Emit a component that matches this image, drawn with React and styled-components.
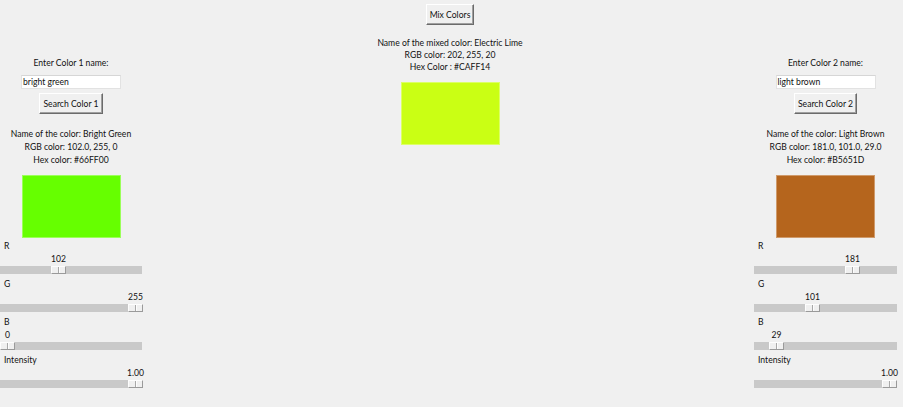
import React from "react";
import styled, { createGlobalStyle } from "styled-components";

const GlobalStyle = createGlobalStyle`
    body {
        margin: 0;
        background: #f0f0f0;
        font-family: "Lato", "Open Sans", sans-serif;
        font-size: 8.6px;
        color: #111;
    }
`;

const Window = styled.div`
    display: grid;
    grid-template-columns: 142px 1fr 143px;
    padding-right: 6px;
    height: 407px;
    overflow: hidden;
`;

const Side = styled.div`
    display: flex;
    flex-direction: column;
    align-items: center;
    padding-top: 57px;
`;

const Center = styled.div`
    display: flex;
    flex-direction: column;
    align-items: center;
    padding-top: 4px;
    padding-left: 4px;
`;

const Text = styled.div`
    line-height: ${p => p.lh || 13}px;
    text-align: center;
    white-space: nowrap;
`;

const Entry = styled.div`
    width: 97px;
    height: 12px;
    margin-top: 5px;
    background: #fff;
    border: 1px solid #e2e2e2;
    border-top-color: #d6d6d6;
    line-height: 12px;
    padding-left: 1px;
    box-sizing: content-box;
    white-space: nowrap;
`;

const Button = styled.div`
    height: 19px;
    padding: 0 3px;
    margin-top: ${p => p.mt || 0}px;
    display: flex;
    align-items: center;
    background: #f0f0f0;
    border: 1px solid;
    border-color: #fff #6b6b6b #6b6b6b #fff;
    box-shadow: inset -1px -1px 0 #a0a0a0;
    white-space: nowrap;
`;

const Info = styled.div`
    margin-top: ${p => p.mt}px;
`;

const Swatch = styled.div`
    width: 99px;
    height: 63px;
    margin-top: ${p => p.mt || 9}px;
    background: ${p => p.color};
    box-shadow: inset 0 0 0 1px rgba(255, 255, 255, 0.35);
`;

const Sliders = styled.div`
    align-self: stretch;
    margin-top: 2px;
`;

const SliderGroup = styled.div`
    height: 38px;
`;

const SliderLabel = styled.div`
    line-height: 13px;
    padding-left: 4px;
`;

const ValueRow = styled.div`
    position: relative;
    height: 13px;
    line-height: 13px;
`;

const Value = styled.span`
    position: absolute;
    transform: translateX(-50%);
    white-space: nowrap;
`;

const Trough = styled.div`
    position: relative;
    height: 8px;
    background: #c9c9c9;
`;

const Thumb = styled.div`
    position: absolute;
    top: 0;
    width: 15px;
    height: 8px;
    box-sizing: border-box;
    background: linear-gradient(to right, #f0f0f0 0 6px, #a8a8a8 6px 7px, #fdfdfd 7px 8px, #f0f0f0 8px);
    border: 1px solid;
    border-color: #fdfdfd #9a9a9a #9a9a9a #fdfdfd;
`;

const TRACK = 143;
const THUMB = 15;

function Slider({ label, value, max, text }) {
    const left = Math.round((value / max) * (TRACK - THUMB));
    return (
        <SliderGroup>
            <SliderLabel>{label}</SliderLabel>
            <ValueRow>
                <Value style={{ left: left + THUMB / 2 }}>{text}</Value>
            </ValueRow>
            <Trough>
                <Thumb style={{ left }} />
            </Trough>
        </SliderGroup>
    );
}

function ColorPanel({ num, query, name, rgb, hex, color, r, g, b }) {
    return (
        <Side>
            <Text>Enter Color {num} name:</Text>
            <Entry>{query}</Entry>
            <Button mt={4}>Search Color {num}</Button>
            <Info mt={14}>
                <Text>Name of the color: {name}</Text>
                <Text>RGB color: {rgb}</Text>
                <Text>Hex color: {hex}</Text>
            </Info>
            <Swatch color={color} mt={8} />
            <Sliders>
                <Slider label="R" value={r} max={255} text={r} />
                <Slider label="G" value={g} max={255} text={g} />
                <Slider label="B" value={b} max={255} text={b} />
                <Slider label="Intensity" value={1} max={1} text="1.00" />
            </Sliders>
        </Side>
    );
}

export default function App() {
    return (
        <>
            <GlobalStyle />
            <Window>
                <ColorPanel
                    num={1}
                    query="bright green"
                    name="Bright Green"
                    rgb="102.0, 255, 0"
                    hex="#66FF00"
                    color="#66ff00"
                    r={102}
                    g={255}
                    b={0}
                />
                <Center>
                    <Button>Mix Colors</Button>
                    <Info mt={12}>
                        <Text lh={12}>Name of the mixed color: Electric Lime</Text>
                        <Text lh={12}>RGB color: 202, 255, 20</Text>
                        <Text lh={12}>Hex Color : #CAFF14</Text>
                    </Info>
                    <Swatch color="#caff14" />
                </Center>
                <ColorPanel
                    num={2}
                    query="light brown"
                    name="Light Brown"
                    rgb="181.0, 101.0, 29.0"
                    hex="#B5651D"
                    color="#b5651d"
                    r={181}
                    g={101}
                    b={29}
                />
            </Window>
        </>
    );
}
